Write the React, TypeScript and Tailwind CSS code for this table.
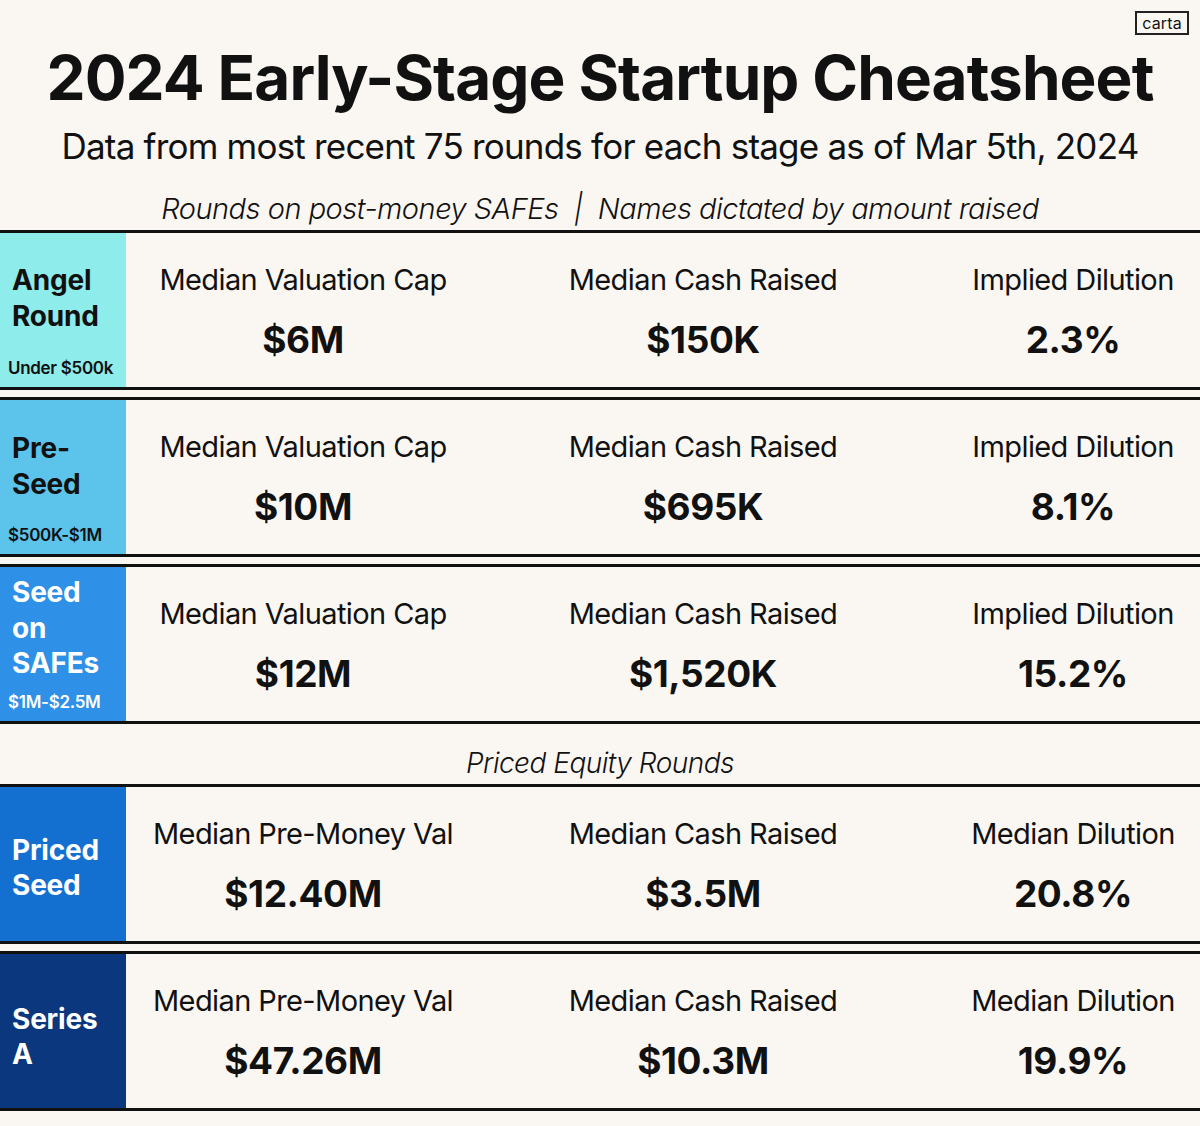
import React from 'react';

type Stage = {
  lines: string[];
  range?: string;
  bg: string;
  text: string;
  pad: string;
  cols: { label: string; value: string }[];
};

const safeStages: Stage[] = [
  {
    lines: ['Angel', 'Round'],
    range: 'Under $500k',
    bg: 'bg-[#8eeceb]',
    text: 'text-[#111]',
    pad: 'pt-[30px]',
    cols: [
      { label: 'Median Valuation Cap', value: '$6M' },
      { label: 'Median Cash Raised', value: '$150K' },
      { label: 'Implied Dilution', value: '2.3%' },
    ],
  },
  {
    lines: ['Pre-', 'Seed'],
    range: '$500K-$1M',
    bg: 'bg-[#5cc4ea]',
    text: 'text-[#111]',
    pad: 'pt-[31px]',
    cols: [
      { label: 'Median Valuation Cap', value: '$10M' },
      { label: 'Median Cash Raised', value: '$695K' },
      { label: 'Implied Dilution', value: '8.1%' },
    ],
  },
  {
    lines: ['Seed', 'on', 'SAFEs'],
    range: '$1M-$2.5M',
    bg: 'bg-[#2e90e6]',
    text: 'text-white',
    pad: 'pt-[8px]',
    cols: [
      { label: 'Median Valuation Cap', value: '$12M' },
      { label: 'Median Cash Raised', value: '$1,520K' },
      { label: 'Implied Dilution', value: '15.2%' },
    ],
  },
];

const pricedStages: Stage[] = [
  {
    lines: ['Priced', 'Seed'],
    bg: 'bg-[#1470d0]',
    text: 'text-white',
    pad: 'pt-[8px]',
    cols: [
      { label: 'Median Pre-Money Val', value: '$12.40M' },
      { label: 'Median Cash Raised', value: '$3.5M' },
      { label: 'Median Dilution', value: '20.8%' },
    ],
  },
  {
    lines: ['Series', 'A'],
    bg: 'bg-[#0a377e]',
    text: 'text-white',
    pad: 'pt-[12px]',
    cols: [
      { label: 'Median Pre-Money Val', value: '$47.26M' },
      { label: 'Median Cash Raised', value: '$10.3M' },
      { label: 'Median Dilution', value: '19.9%' },
    ],
  },
];

const colWidths = ['w-[354px]', 'w-[446px]', 'flex-1 pl-[20px]'];

function StageRow({ stage, first }: { stage: Stage; first?: boolean }) {
  return (
    <div className={`flex h-[160px] border-y-[3px] border-[#111] ${first ? '' : 'mt-[7px]'}`}>
      <div
        className={`w-[126px] shrink-0 flex flex-col pl-[12px] ${stage.bg} ${stage.text} ${stage.pad} ${
          stage.range ? 'justify-between pb-[8px]' : 'justify-center'
        }`}
      >
        <div className="text-[28px] font-bold leading-[35.5px] tracking-[-0.2px]">
          {stage.lines.map(l => (
            <div key={l}>{l}</div>
          ))}
        </div>
        {stage.range && (
          <div className="text-[17px] font-semibold leading-[22px] -ml-[4px] tracking-[-0.3px]">{stage.range}</div>
        )}
      </div>
      {stage.cols.map((c, i) => (
        <div key={c.label} className={`${colWidths[i]} flex flex-col items-center pt-[30px] text-[#111]`}>
          <div className="text-[29px] leading-[34px] tracking-[-0.6px]">{c.label}</div>
          <div className="mt-[20px] text-[37px] font-bold leading-[46px] tracking-[-0.4px]">{c.value}</div>
        </div>
      ))}
    </div>
  );
}

export default function App() {
  return (
    <div className="relative w-[1200px] h-[1126px] bg-[#faf7f2] overflow-hidden font-['Inter',sans-serif] text-[#111]">
      {/* logo */}
      <div className="absolute right-[11px] top-[11px] border-2 border-[#222] px-[5px] text-[16px] leading-[20px] tracking-[0.2px]">
        carta
      </div>

      <h1 className="pt-[45px] text-center text-[62px] font-bold leading-[66px] tracking-[-0.9px]">
        2024 Early-Stage Startup Cheatsheet
      </h1>
      <p className="mt-[14px] text-center text-[35px] leading-[42px] tracking-[-0.8px]">
        Data from most recent 75 rounds for each stage as of Mar 5th, 2024
      </p>
      <p className="mt-[24px] h-[39px] text-center text-[29px] font-light italic leading-[36px] tracking-[-0.5px]">
        Rounds on post-money SAFEs&nbsp;&nbsp;|&nbsp;&nbsp;Names dictated by amount raised
      </p>

      <div>
        {safeStages.map((s, i) => (
          <StageRow key={s.lines.join('')} stage={s} first={i === 0} />
        ))}
      </div>

      <p className="h-[60px] flex items-center justify-center pt-[18px] text-[28px] font-light italic tracking-[-0.5px]">
        Priced Equity Rounds
      </p>

      <div>
        {pricedStages.map((s, i) => (
          <StageRow key={s.lines.join('')} stage={s} first={i === 0} />
        ))}
      </div>
    </div>
  );
}
